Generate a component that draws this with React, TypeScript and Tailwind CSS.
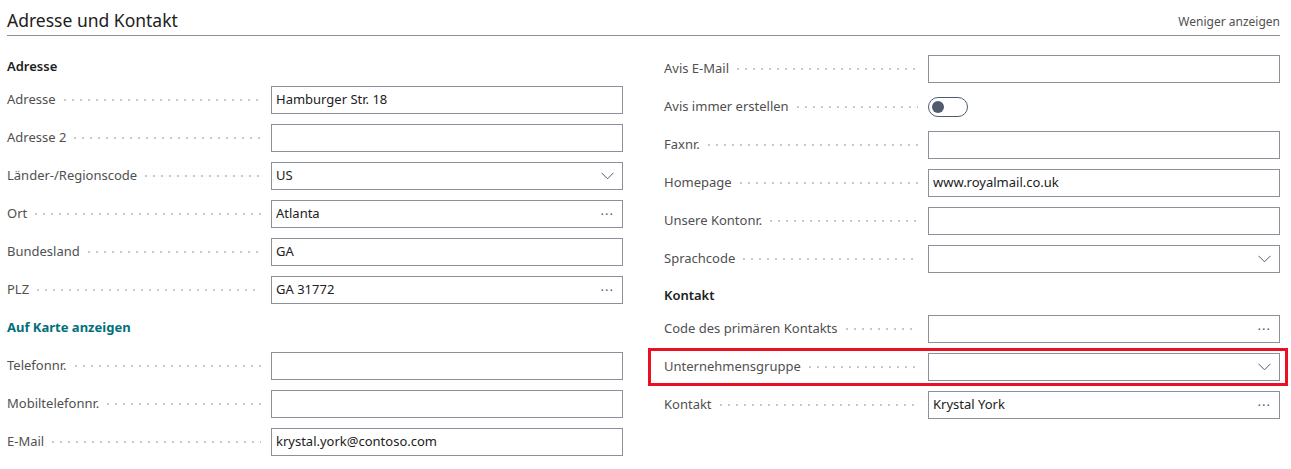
import React from "react";

type Field = {
  label: string;
  value?: string;
  kind?: "text" | "select" | "lookup" | "toggle";
  highlight?: boolean;
};

const leftTop: Field[] = [
  { label: "Adresse", value: "Hamburger Str. 18" },
  { label: "Adresse 2" },
  { label: "Länder-/Regionscode", value: "US", kind: "select" },
  { label: "Ort", value: "Atlanta", kind: "lookup" },
  { label: "Bundesland", value: "GA" },
  { label: "PLZ", value: "GA 31772", kind: "lookup" },
];

const leftBottom: Field[] = [
  { label: "Telefonnr." },
  { label: "Mobiltelefonnr." },
  { label: "E-Mail", value: "krystal.york@contoso.com" },
];

const rightTop: Field[] = [
  { label: "Avis E-Mail" },
  { label: "Avis immer erstellen", kind: "toggle" },
  { label: "Faxnr." },
  { label: "Homepage", value: "www.royalmail.co.uk" },
  { label: "Unsere Kontonr." },
  { label: "Sprachcode", kind: "select" },
];

const rightBottom: Field[] = [
  { label: "Code des primären Kontakts", kind: "lookup" },
  { label: "Unternehmensgruppe", kind: "select", highlight: true },
  { label: "Kontakt", value: "Krystal York", kind: "lookup" },
];

function Chevron() {
  return (
    <svg width="13" height="8" viewBox="0 0 13 8" fill="none" className="shrink-0">
      <path d="M0.5 0.8 L6.5 6.8 L12.5 0.8" stroke="#505c6d" strokeWidth="1" />
    </svg>
  );
}

function Row({ field }: { field: Field }) {
  const kind = field.kind ?? "text";
  return (
    <div className="relative flex h-[38px] items-center">
      {field.highlight && (
        <div className="pointer-events-none absolute -left-4 -right-2 top-0 bottom-0 border-[3px] border-[#e81123]" />
      )}
      <div className="flex w-[264px] shrink-0 items-center pr-[10px]">
        <span className="whitespace-nowrap text-[#505050]">{field.label}</span>
        <span className="ml-2 h-[2px] flex-1 bg-[linear-gradient(to_right,#c8c8c8_2px,transparent_2px)] bg-[length:8px_2px] bg-repeat-x" />
      </div>
      {kind === "toggle" ? (
        <div className="flex h-[20px] w-[40px] items-center rounded-full border border-[#505c6d] px-[3px]">
          <span className="h-[12px] w-[12px] rounded-full bg-[#505c6d]" />
        </div>
      ) : (
        <div className="flex h-[28px] flex-1 items-center border border-[#8a8f99] bg-white pl-[4px] pr-[8px]">
          <span className="flex-1 truncate text-[#212121]">{field.value}</span>
          {kind === "select" && <Chevron />}
          {kind === "lookup" && <span className="text-[13px] leading-none tracking-[1px] text-[#505c6d]">···</span>}
        </div>
      )}
    </div>
  );
}

export default function App() {
  return (
    <div
      className="h-[469px] w-[1291px] bg-white pl-[7px] pr-[11px] text-[13px]"
      style={{ fontFamily: '"Noto Sans", "Open Sans", sans-serif' }}
    >
      <div className="flex h-[36px] items-end justify-between border-b border-[#8a8f99] pb-[3px]">
        <h2 className="text-[17.5px] leading-[24px] text-[#212121]">Adresse und Kontakt</h2>
        <button type="button" className="pb-[1px] text-[12px] text-[#505050]">Weniger anzeigen</button>
      </div>
      <div className="grid grid-cols-2 gap-x-[41px] pt-[14px]">
        <div>
          <div className="flex h-[31px] items-center pt-[3px] font-semibold text-[#212121]">Adresse</div>
          {leftTop.map((f) => (
            <Row key={f.label} field={f} />
          ))}
          <div className="flex h-[38px] items-center font-bold text-[#00707a]">Auf Karte anzeigen</div>
          {leftBottom.map((f) => (
            <Row key={f.label} field={f} />
          ))}
        </div>
        <div>
          {rightTop.map((f) => (
            <Row key={f.label} field={f} />
          ))}
          <div className="flex h-[32px] items-center pt-[4px] font-semibold text-[#212121]">Kontakt</div>
          {rightBottom.map((f) => (
            <Row key={f.label} field={f} />
          ))}
        </div>
      </div>
    </div>
  );
}
